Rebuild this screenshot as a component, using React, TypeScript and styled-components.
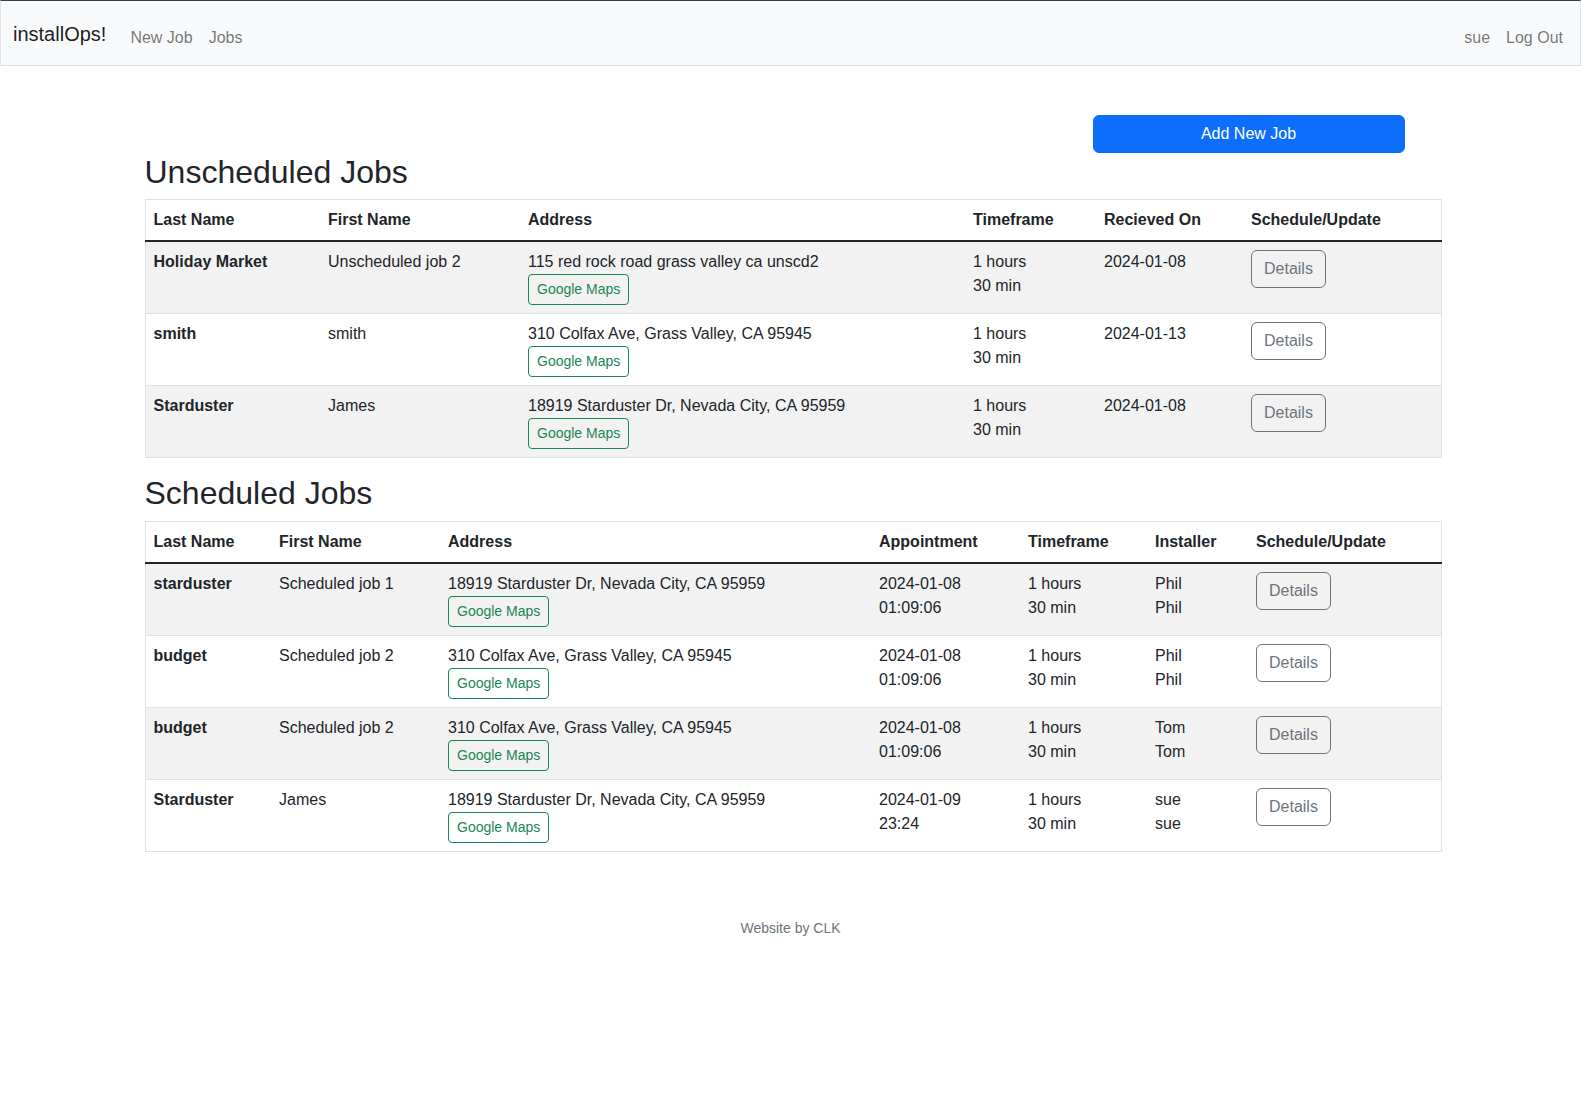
import styled, { createGlobalStyle } from "styled-components";

type UnscheduledJob = {
  id: number;
  lastName: string;
  firstName: string;
  address: string;
  received: string;
};

type ScheduledJob = {
  id: number;
  lastName: string;
  firstName: string;
  address: string;
  date: string;
  time: string;
  installer: string;
};

const unscheduled: UnscheduledJob[] = [
  {
    id: 1,
    lastName: "Holiday Market",
    firstName: "Unscheduled job 2",
    address: "115 red rock road grass valley ca unscd2",
    received: "2024-01-08",
  },
  {
    id: 2,
    lastName: "smith",
    firstName: "smith",
    address: "310 Colfax Ave, Grass Valley, CA 95945",
    received: "2024-01-13",
  },
  {
    id: 3,
    lastName: "Starduster",
    firstName: "James",
    address: "18919 Starduster Dr, Nevada City, CA 95959",
    received: "2024-01-08",
  },
];

const scheduled: ScheduledJob[] = [
  {
    id: 1,
    lastName: "starduster",
    firstName: "Scheduled job 1",
    address: "18919 Starduster Dr, Nevada City, CA 95959",
    date: "2024-01-08",
    time: "01:09:06",
    installer: "Phil",
  },
  {
    id: 2,
    lastName: "budget",
    firstName: "Scheduled job 2",
    address: "310 Colfax Ave, Grass Valley, CA 95945",
    date: "2024-01-08",
    time: "01:09:06",
    installer: "Phil",
  },
  {
    id: 3,
    lastName: "budget",
    firstName: "Scheduled job 2",
    address: "310 Colfax Ave, Grass Valley, CA 95945",
    date: "2024-01-08",
    time: "01:09:06",
    installer: "Tom",
  },
  {
    id: 4,
    lastName: "Starduster",
    firstName: "James",
    address: "18919 Starduster Dr, Nevada City, CA 95959",
    date: "2024-01-09",
    time: "23:24",
    installer: "sue",
  },
];

const unscheduledCols = [175, 200, 445, 131, 147, 198];
const scheduledCols = [126, 169, 431, 149, 127, 101, 193];

const App = () => {
  return (
    <>
      <GlobalStyle />
      <StyledNavbar>
        <StyledNavLeft>
          <StyledBrand href="#">installOps!</StyledBrand>
          <StyledNavLink href="#">New Job</StyledNavLink>
          <StyledNavLink href="#">Jobs</StyledNavLink>
        </StyledNavLeft>
        <StyledNavRight>
          <StyledNavLink href="#">sue</StyledNavLink>
          <StyledNavLink href="#">Log Out</StyledNavLink>
        </StyledNavRight>
      </StyledNavbar>

      <StyledContainer>
        <StyledButtonRow>
          <StyledPrimaryButton>Add New Job</StyledPrimaryButton>
        </StyledButtonRow>

        <StyledHeading>Unscheduled Jobs</StyledHeading>
        <StyledTable>
          <colgroup>
            {unscheduledCols.map((w, i) => (
              <col key={`uc-${i}`} width={w} />
            ))}
          </colgroup>
          <thead>
            <tr>
              <StyledTh>Last Name</StyledTh>
              <StyledTh>First Name</StyledTh>
              <StyledTh>Address</StyledTh>
              <StyledTh>Timeframe</StyledTh>
              <StyledTh>Recieved On</StyledTh>
              <StyledTh>Schedule/Update</StyledTh>
            </tr>
          </thead>
          <StyledTbody>
            {unscheduled.map((job) => (
              <StyledRow key={`unscheduled-${job.id}`}>
                <StyledRowHead>{job.lastName}</StyledRowHead>
                <StyledTd>{job.firstName}</StyledTd>
                <StyledTd>
                  {job.address}
                  <StyledMapsButton>Google Maps</StyledMapsButton>
                </StyledTd>
                <StyledTd>
                  1 hours
                  <br />
                  30 min
                </StyledTd>
                <StyledTd>{job.received}</StyledTd>
                <StyledTd>
                  <StyledDetailsButton>Details</StyledDetailsButton>
                </StyledTd>
              </StyledRow>
            ))}
          </StyledTbody>
        </StyledTable>

        <StyledHeading>Scheduled Jobs</StyledHeading>
        <StyledTable>
          <colgroup>
            {scheduledCols.map((w, i) => (
              <col key={`sc-${i}`} width={w} />
            ))}
          </colgroup>
          <thead>
            <tr>
              <StyledTh>Last Name</StyledTh>
              <StyledTh>First Name</StyledTh>
              <StyledTh>Address</StyledTh>
              <StyledTh>Appointment</StyledTh>
              <StyledTh>Timeframe</StyledTh>
              <StyledTh>Installer</StyledTh>
              <StyledTh>Schedule/Update</StyledTh>
            </tr>
          </thead>
          <StyledTbody>
            {scheduled.map((job) => (
              <StyledRow key={`scheduled-${job.id}`}>
                <StyledRowHead>{job.lastName}</StyledRowHead>
                <StyledTd>{job.firstName}</StyledTd>
                <StyledTd>
                  {job.address}
                  <StyledMapsButton>Google Maps</StyledMapsButton>
                </StyledTd>
                <StyledTd>
                  {job.date}
                  <br />
                  {job.time}
                </StyledTd>
                <StyledTd>
                  1 hours
                  <br />
                  30 min
                </StyledTd>
                <StyledTd>
                  {job.installer}
                  <br />
                  {job.installer}
                </StyledTd>
                <StyledTd>
                  <StyledDetailsButton>Details</StyledDetailsButton>
                </StyledTd>
              </StyledRow>
            ))}
          </StyledTbody>
        </StyledTable>
      </StyledContainer>

      <StyledFooter>Website by CLK</StyledFooter>
    </>
  );
};

export default App;

const GlobalStyle = createGlobalStyle`
  * {
    box-sizing: border-box;
  }
  body {
    margin: 0;
    background: #fff;
    color: #212529;
    font-family: "Liberation Sans", Arial, sans-serif;
    font-size: 16px;
    line-height: 1.5;
  }
`;

const StyledNavbar = styled.nav`
  height: 66px;
  display: flex;
  align-items: center;
  justify-content: space-between;
  padding: 10px 9px 0 12px;
  background: #f8f9fa;
  border: 1px solid #dee2e6;
  border-top-color: #3a3a3a;
`;

const StyledNavLeft = styled.div`
  display: flex;
  align-items: center;
`;

const StyledNavRight = styled.div`
  display: flex;
  align-items: center;
`;

const StyledBrand = styled.a`
  font-size: 20px;
  line-height: 30px;
  color: rgba(0, 0, 0, 0.9);
  text-decoration: none;
  margin-right: 16px;
  margin-bottom: 8px;
`;

const StyledNavLink = styled.a`
  padding: 8px;
  line-height: 24px;
  color: rgba(0, 0, 0, 0.55);
  text-decoration: none;
`;

const StyledContainer = styled.main`
  width: 1300px;
  padding-left: 4px;
  margin: 49px auto 0;
`;

const StyledButtonRow = styled.div`
  display: flex;
  justify-content: flex-end;
  padding-right: 36px;
`;

const StyledPrimaryButton = styled.button`
  width: 312px;
  height: 38px;
  padding: 6px 12px;
  font-family: inherit;
  font-size: 16px;
  line-height: 24px;
  color: #fff;
  background: #0d6efd;
  border: 1px solid #0d6efd;
  border-radius: 6px;
`;

const StyledHeading = styled.h2`
  margin: 0 0 8px;
  font-size: 32px;
  font-weight: 500;
  line-height: 1.2;
`;

const StyledTable = styled.table`
  width: 1296px;
  table-layout: fixed;
  border-collapse: collapse;
  border: 1px solid #dee2e6;
  margin-bottom: 16px;
  vertical-align: top;
`;

const StyledTh = styled.th`
  padding: 8px;
  text-align: left;
  font-weight: bold;
  line-height: 24px;
`;

const StyledTbody = styled.tbody`
  border-top: 2px solid #212529;
`;

const StyledRow = styled.tr`
  border-bottom: 1px solid #dee2e6;

  &:nth-child(odd) {
    background: #f2f2f2;
  }
`;

const StyledRowHead = styled.th`
  padding: 8px;
  text-align: left;
  vertical-align: top;
  font-weight: bold;
`;

const StyledTd = styled.td`
  padding: 8px;
  vertical-align: top;
`;

const StyledMapsButton = styled.button`
  display: block;
  padding: 4px 8px;
  font-family: inherit;
  font-size: 14px;
  line-height: 21px;
  color: #198754;
  background: transparent;
  border: 1px solid #198754;
  border-radius: 4px;
`;

const StyledDetailsButton = styled.button`
  display: block;
  padding: 6px 12px;
  font-family: inherit;
  font-size: 16px;
  line-height: 24px;
  color: #6c757d;
  background: transparent;
  border: 1px solid #6c757d;
  border-radius: 6px;
`;

const StyledFooter = styled.footer`
  padding-top: 50px;
  text-align: center;
  font-size: 14px;
  line-height: 21px;
  color: #6c757d;
`;
